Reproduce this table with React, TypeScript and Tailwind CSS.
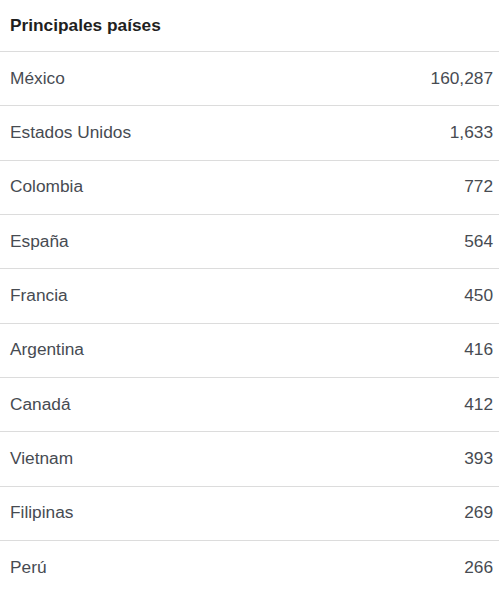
const rows: [string, string][] = [
  ["México", "160,287"],
  ["Estados Unidos", "1,633"],
  ["Colombia", "772"],
  ["España", "564"],
  ["Francia", "450"],
  ["Argentina", "416"],
  ["Canadá", "412"],
  ["Vietnam", "393"],
  ["Filipinas", "269"],
  ["Perú", "266"],
];

export default function App() {
  return (
    <div className="w-[499px] h-[591px] overflow-hidden bg-white font-['Liberation_Sans',Arial,sans-serif]">
      <div className="h-[51px] flex items-center px-[10px] text-[17.3px] font-bold text-[#1f1f1f]">
        Principales países
      </div>
      {rows.map(([country, count]) => (
        <div
          key={country}
          className="h-[54.33px] flex items-center justify-between border-t border-[#dcdcdc] pl-[10px] pr-[6px] text-[17.3px] text-[#474b52]"
        >
          <span>{country}</span>
          <span>{count}</span>
        </div>
      ))}
    </div>
  );
}
